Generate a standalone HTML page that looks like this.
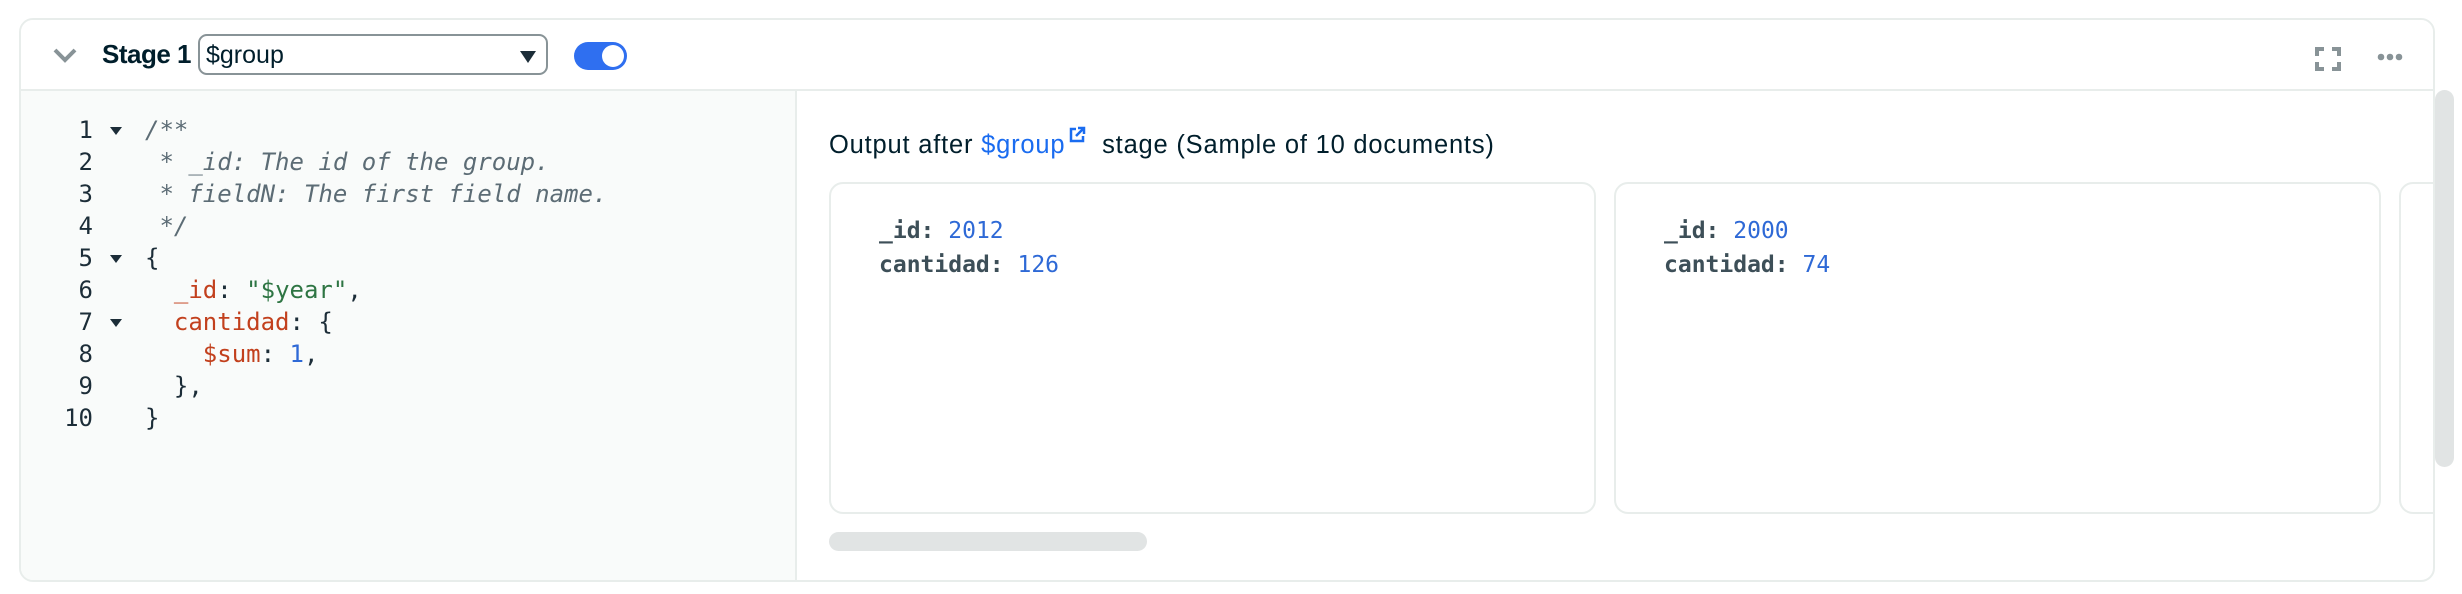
<!DOCTYPE html>
<html><head><meta charset="utf-8"><style>
*{box-sizing:border-box;margin:0;padding:0}
body{width:2462px;height:594px;background:#fff;position:relative;overflow:hidden;font-family:"Liberation Sans",sans-serif;color:#001e2b}
.panel{position:absolute;left:19px;top:18px;width:2416px;height:564px;border:2px solid #e8edeb;border-radius:14px;overflow:hidden}
.hdr{position:absolute;left:0;top:0;right:0;height:71px;border-bottom:2px solid #e8edeb;background:#fff}
.editor{position:absolute;left:0;top:71px;width:776px;bottom:0;background:#f9fbfa;border-right:2px solid #e8edeb}
.code{position:absolute;font-family:"DejaVu Sans Mono","Liberation Mono",monospace;font-size:24px;line-height:32px;white-space:pre;color:#1c2d38}
.ln{position:absolute;left:16px;width:56px;text-align:right;font-family:"DejaVu Sans Mono",monospace;font-size:24px;line-height:32px;color:#1c2d38}
.c{color:#5c6c75;font-style:italic}.k{color:#c2401d}.s{color:#2e7543}.n{color:#2e69d6}
.card{position:absolute;top:162px;height:332px;border:2px solid #e8edeb;border-radius:14px;background:#fff}
.doc{position:absolute;left:48px;top:30px;font-family:"DejaVu Sans Mono",monospace;font-size:23px;line-height:34px;white-space:pre;color:#3d4f58;font-weight:bold}
.doc .n{font-weight:normal}
</style></head><body>
<div class="panel">
 <div class="hdr">
  <svg style="position:absolute;left:31px;top:26px" width="26" height="18" viewBox="0 0 26 18"><path d="M3 4 L13 14 L23 4" fill="none" stroke="#889397" stroke-width="4"/></svg>
  <div style="position:absolute;left:81px;top:19px;font-size:26px;font-weight:bold;letter-spacing:-0.5px">Stage 1</div>
  <div style="position:absolute;left:177px;top:14px;width:350px;height:41px;border:2px solid #889397;border-radius:9px;background:#fff">
   <span style="position:absolute;left:6px;top:5px;font-size:25px">$group</span>
   <svg style="position:absolute;right:10px;top:15px" width="16" height="12"><path d="M0 0H16L8 12Z" fill="#1c2d38"/></svg>
  </div>
  <div style="position:absolute;left:553px;top:22px;width:53px;height:28px;border-radius:14px;background:#2f6ff0"><div style="position:absolute;right:3px;top:3px;width:22px;height:22px;border-radius:50%;background:#fff"></div></div>
  <svg style="position:absolute;left:2294px;top:27px" width="26" height="24" viewBox="0 0 26 24"><path d="M2 9V2H9M17 2H24V9M24 15V22H17M9 22H2V15" fill="none" stroke="#889397" stroke-width="4"/></svg>
  <svg style="position:absolute;left:2356px;top:33px" width="26" height="8"><circle cx="4" cy="4" r="3.3" fill="#889397"/><circle cx="13" cy="4" r="3.3" fill="#889397"/><circle cx="22" cy="4" r="3.3" fill="#889397"/></svg>
 </div>
 <div class="editor">
  <div class="ln" style="top:23px">1<br>2<br>3<br>4<br>5<br>6<br>7<br>8<br>9<br>10</div>
  <svg style="position:absolute;left:89px;top:36px" width="12" height="260"><path d="M0 0H12L6 8Z M0 128H12L6 136Z M0 192H12L6 200Z" fill="#1c2d38"/></svg>
  <div class="code" style="left:124px;top:23px"><span class="c">/**
 * _id: The id of the group.
 * fieldN: The first field name.
 */</span>
{
  <span class="k">_id</span>: <span class="s">"$year"</span>,
  <span class="k">cantidad</span>: {
    <span class="k">$sum</span>: <span class="n">1</span>,
  },
}</div>
 </div>
 <div style="position:absolute;left:808px;top:106px;font-size:25.5px;letter-spacing:0.8px;white-space:nowrap">Output after <span style="color:#1a6cf0">$group</span><svg width="18" height="18" viewBox="0 0 18 18" style="vertical-align:9px;margin-left:3px"><path d="M8 3H3V15H15V10" fill="none" stroke="#1a6cf0" stroke-width="2.5"/><path d="M10 2H16V8M16 2L8 10" fill="none" stroke="#1a6cf0" stroke-width="2.5"/></svg>&nbsp; stage (Sample of 10 documents)</div>
 <div class="card" style="left:808px;width:767px"><div class="doc">_id: <span class="n">2012</span>
cantidad: <span class="n">126</span></div></div>
 <div class="card" style="left:1593px;width:767px"><div class="doc">_id: <span class="n">2000</span>
cantidad: <span class="n">74</span></div></div>
 <div class="card" style="left:2378px;width:100px"></div>
 <div style="position:absolute;left:808px;top:512px;width:318px;height:19px;border-radius:10px;background:#e1e4e4"></div>
</div>
<div style="position:absolute;left:2435px;top:90px;width:19px;height:377px;border-radius:10px;background:#e1e4e4"></div>
</body></html>
